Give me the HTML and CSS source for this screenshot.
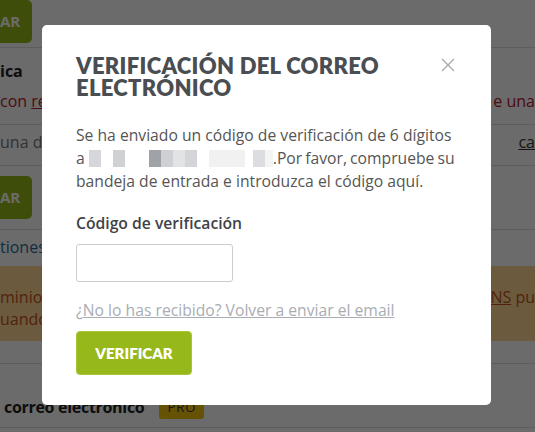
FILE: index.html
```html
<!DOCTYPE html>
<html lang="es">
<head>
    <meta charset="UTF-8">
    <meta name="viewport" content="width=device-width, initial-scale=1.0">
    <title>Verificación del correo electrónico</title>
    <link rel="stylesheet" href="styles.css">
</head>
<body>

    <div class="page">
        <div class="row row-btn first">
            <span class="btn-bg">AR</span>
        </div>
        <div class="row row-title">
            <span class="strong">ica</span>
        </div>
        <div class="row row-split red">
            <span>con <u>re</u></span>
            <span>e una</span>
        </div>
        <div class="row row-split muted">
            <span>una di</span>
            <span class="dark"><u>ca</u></span>
        </div>
        <div class="row row-btn">
            <span class="btn-bg">AR</span>
        </div>
        <div class="row row-link">
            <span class="blue">tiones</span>
        </div>
        <div class="alert-bg">
            <div class="row-split">
                <span>minio d</span>
                <span><u>ONS</u> pu</span>
            </div>
            <div>uando</div>
        </div>
        <div class="row row-pro">
            <span class="strong">correo electrónico</span>
            <span class="pro">PRO</span>
        </div>
    </div>

    <div class="overlay"></div>

    <div class="modal">
        <button type="button" class="close" aria-label="Cerrar">
            <svg width="14" height="14" viewBox="0 0 14 14">
                <path d="M1 1 L13 13 M13 1 L1 13" stroke="#a6a9ad" stroke-width="1.3" fill="none"/>
            </svg>
        </button>
        <h2 class="title">Verificación del correo electrónico</h2>
        <p class="text">
            Se ha enviado un código de verificación de 6 dígitos
            <span class="nowrap">a <span class="blur"></span>.Por favor, compruebe su</span>
            bandeja de entrada e introduzca el código aquí.
        </p>
        <label for="code" class="label">Código de verificación</label>
        <input type="text" id="code" class="code">
        <p class="resend">¿<a href="#">No lo has recibido? Volver a enviar el email</a></p>
        <button type="button" class="verify">Verificar</button>
    </div>

</body>
</html>
```

FILE: styles.css
```css
body {
    margin: 0;
    font-family: "Open Sans", sans-serif;
    background: #fff;
    overflow: hidden;
    height: 432px;
}

.page {
    font-size: 16px;
    color: #333;
}

.row {
    border-bottom: 1px solid #ddd;
}

.row-btn {
    height: 64px;
    padding-top: 10px;
    box-sizing: border-box;
}

.row-btn.first {
    height: 48px;
    padding-top: 0;
}

.btn-bg {
    display: inline-block;
    width: 32px;
    height: 35px;
    line-height: 35px;
    background: #97b81a;
    color: #fff;
    font-weight: bold;
    font-size: 15px;
    border-radius: 0 0 5px 0;
}

.row-btn .btn-bg {
    height: 43px;
    line-height: 43px;
    border-radius: 0 5px 5px 0;
}

.row-title {
    border: none;
    padding-top: 12px;
    height: 26px;
}

.strong {
    font-weight: bold;
    color: #222;
}

.row-split {
    display: flex;
    justify-content: space-between;
}

.red {
    color: #b4202a;
    height: 38px;
    line-height: 30px;
}

.muted {
    color: #777;
    height: 40px;
    line-height: 34px;
}

.dark {
    color: #333;
}

.row-link {
    border: none;
    height: 36px;
    line-height: 34px;
}

.blue {
    color: #1f6f97;
}

.alert-bg {
    background: #ffd794;
    color: #c0531c;
    padding-top: 20px;
    line-height: 22px;
    border-bottom: 22px solid #fff;
    height: 55px;
}

.row-pro {
    border-top: 1px solid #ddd;
    padding: 23px 0 0 4px;
    height: 40px;
    display: flex;
    align-items: center;
    gap: 15px;
    font-size: 16px;
}

.row-pro .strong {
    letter-spacing: -0.3px;
}

.pro {
    background: #f2c30a;
    color: #333;
    font-size: 13px;
    letter-spacing: 1px;
    padding: 3px 8px;
    border-radius: 3px;
}

.overlay {
    position: fixed;
    inset: 0;
    background: rgba(0, 0, 0, 0.58);
}

.modal {
    position: absolute;
    left: 42px;
    top: 25px;
    width: 449px;
    height: 380px;
    box-sizing: border-box;
    background: #fff;
    border-radius: 5px;
    padding: 30px 35px 0 34px;
}

.close {
    position: absolute;
    top: 33px;
    right: 36px;
    padding: 0;
    border: none;
    background: none;
}

.title {
    margin: 0 0 25px;
    font-family: Lato, sans-serif;
    font-weight: 800;
    font-size: 22px;
    line-height: 22px;
    letter-spacing: 0.3px;
    text-transform: uppercase;
    color: #4a4d52;
    width: 330px;
}

.text {
    margin: 0 0 19px;
    font-size: 15.7px;
    line-height: 23px;
    color: #555;
}

.nowrap {
    white-space: nowrap;
    word-spacing: -1px;
}

.blur {
    display: inline-block;
    width: 184px;
    height: 17px;
    vertical-align: -3px;
    margin-left: 1px;
    background:
        linear-gradient(90deg, #d6d7da 0 12px, #fff 12px 24px, #d0d1d4 24px 36px, #fff 36px 60px, #9fa2a6 60px 72px, #cfd0d3 72px 84px, #e2e3e5 84px 96px, #d4d5d8 96px 108px, #fff 108px 120px, #f1f1f2 120px 156px, #fff 156px 164px, #dcdde0 164px 176px, #f4f4f5 176px);
}

.label {
    display: block;
    font-weight: 600;
    font-size: 15.7px;
    color: #3f4247;
    margin-bottom: 10px;
}

.code {
    display: block;
    width: 157px;
    height: 38px;
    box-sizing: border-box;
    border: 1px solid #ccc;
    border-radius: 3px;
    margin: 0 0 17px;
}

.resend {
    margin: 0 0 10px;
    font-size: 15.7px;
    color: #a9adb3;
}

.resend a {
    color: #a9adb3;
}

.verify {
    width: 116px;
    height: 44px;
    background: #97b81a;
    border: 1px solid #a8c63a;
    border-radius: 4px;
    color: #fff;
    font-family: Lato, sans-serif;
    font-weight: 800;
    font-size: 15px;
    text-transform: uppercase;
    cursor: pointer;
}
```
